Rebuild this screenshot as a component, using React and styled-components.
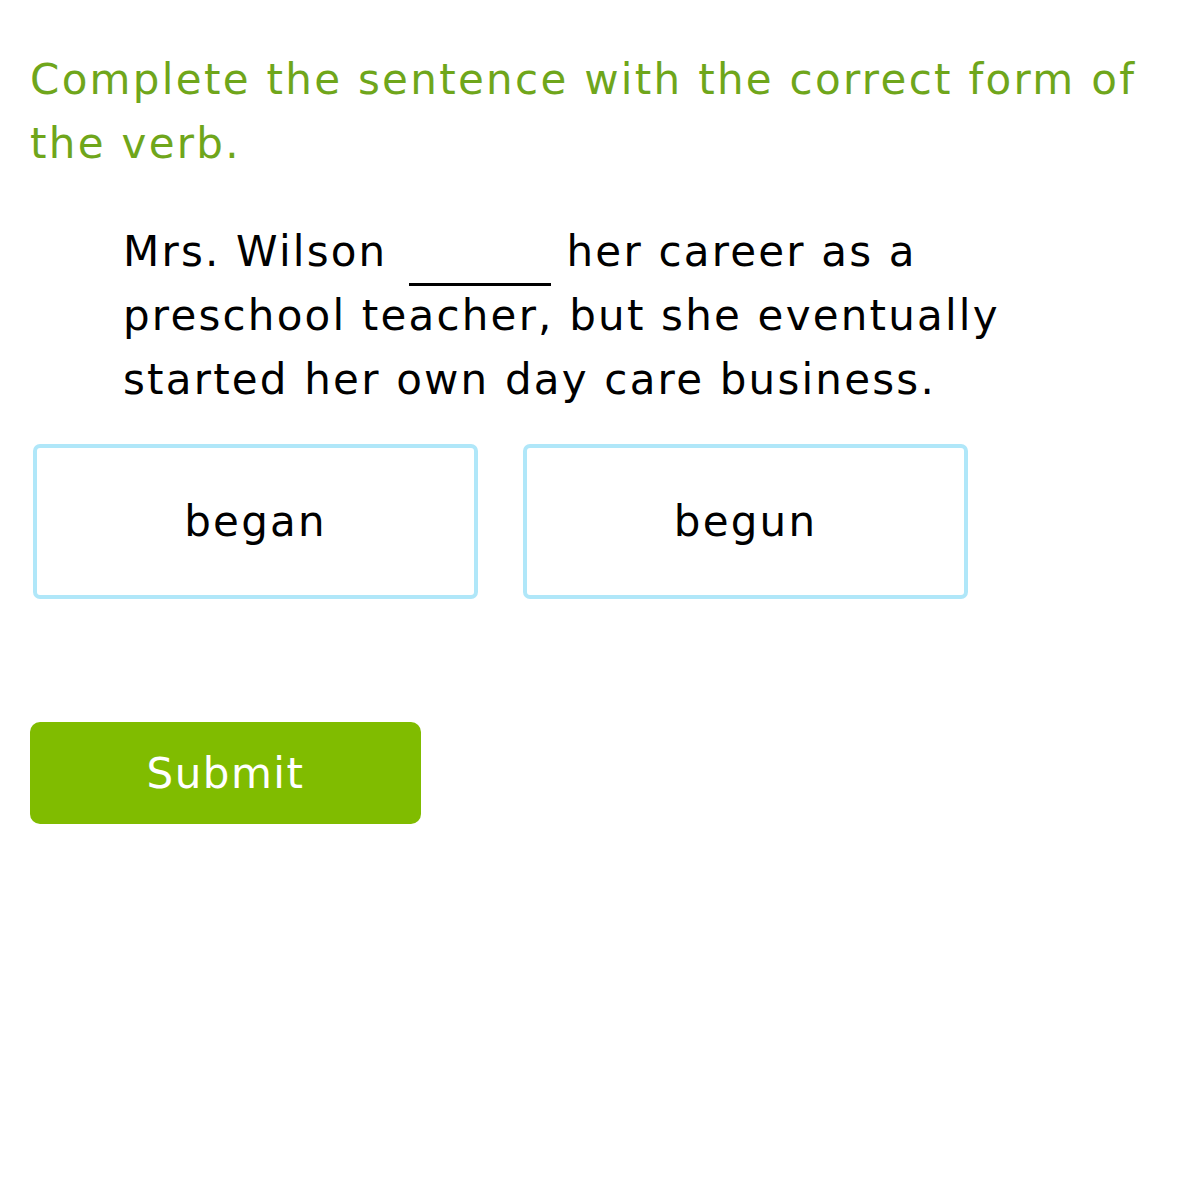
import React from "react";
import styled, { createGlobalStyle } from "styled-components";

const Global = createGlobalStyle`
  html, body { margin: 0; padding: 0; background: #ffffff; }
  body { font-family: "DejaVu Sans", Verdana, sans-serif; }
`;

const Page = styled.div`
  padding: 48px 30px 0 30px;
  display: flex;
  flex-direction: column;
  align-items: flex-start;
`;

const Prompt = styled.h1`
  margin: 0;
  font-weight: normal;
  font-size: 42px;
  line-height: 64px;
  letter-spacing: 2.3px;
  color: #6fa61b;
`;

const Sentence = styled.p`
  margin: 44px 0 0 93px;
  font-size: 42px;
  line-height: 64px;
  letter-spacing: 2.2px;
  color: #000;
  width: 960px;
`;

const Blank = styled.span`
  display: inline-block;
  width: 142px;
  border-bottom: 3px solid #000;
  vertical-align: baseline;
  margin: 0 0 0 6px;
  transform: translateY(20px);
`;

const Choices = styled.div`
  display: flex;
  gap: 45px;
  margin: 32px 0 0 3px;
`;

const Choice = styled.button`
  width: 445px;
  height: 155px;
  box-sizing: border-box;
  border: 4px solid #b0e7f9;
  border-radius: 7px;
  background: #fff;
  font-family: inherit;
  font-size: 42px;
  letter-spacing: 2.2px;
  color: #000;
  display: flex;
  align-items: center;
  justify-content: center;
  padding: 0;
`;

const Submit = styled.button`
  margin-top: 123px;
  width: 391px;
  height: 102px;
  border: none;
  border-radius: 10px;
  background: #80bc00;
  color: #fff;
  font-family: inherit;
  font-size: 42px;
  letter-spacing: 1.5px;
  padding: 0;
`;

export default function App() {
  return (
    <>
      <Global />
      <Page>
        <Prompt>Complete the sentence with the correct form of the verb.</Prompt>
        <Sentence>
          Mrs. Wilson <Blank /> her career as a preschool teacher, but she eventually started her own day care business.
        </Sentence>
        <Choices>
          <Choice>began</Choice>
          <Choice>begun</Choice>
        </Choices>
        <Submit>Submit</Submit>
      </Page>
    </>
  );
}
